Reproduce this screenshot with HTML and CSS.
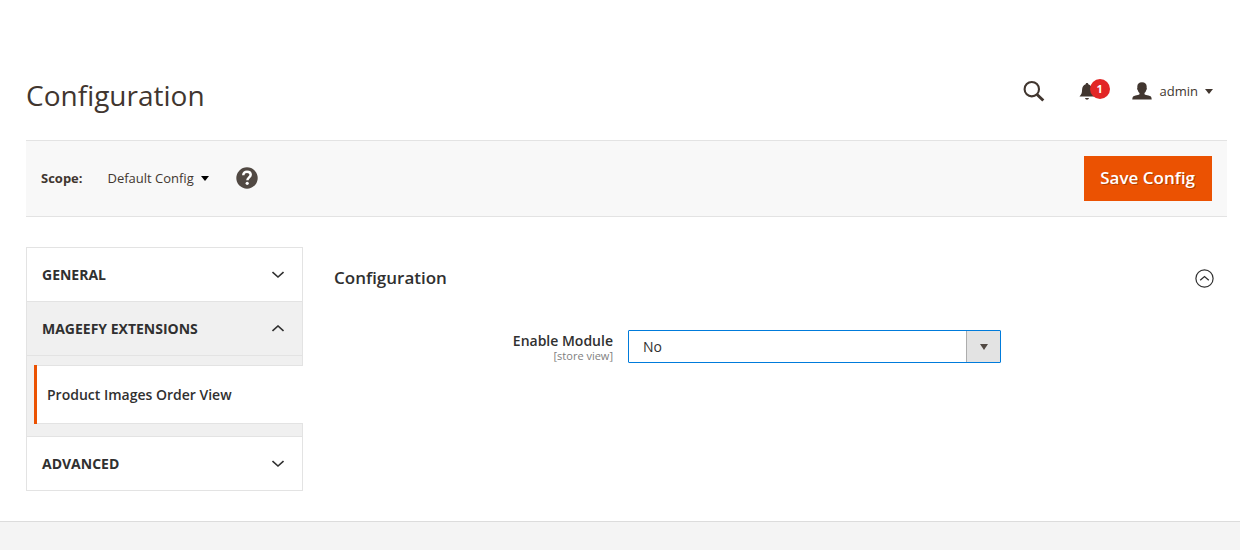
FILE: index.html
```html
<!DOCTYPE html>
<html lang="en">
<head>
<meta charset="utf-8">
<meta name="viewport" content="width=device-width, initial-scale=1">
<title>Configuration</title>
<link rel="stylesheet" href="styles.css">
</head>
<body>
<div class="page">
  <header class="header">
    <h1 class="page-title">Configuration</h1>
    <div class="header-tools">
      <button class="tool tool-search" type="button" aria-label="Search">
        <svg width="22" height="22" viewBox="0 0 22 22" fill="none" stroke="#41362f"><circle cx="8.800" cy="9.200" r="7.200" stroke-width="2.100"/><path d="M14 14.500l6.300 6" stroke-width="3"/></svg>
      </button>
      <button class="tool tool-bell" type="button" aria-label="Notifications">
        <svg width="16" height="18" viewBox="0 0 16 18" fill="#41362f"><path d="M8 1c.8 0 1.300.5 1.300 1.300 2.300.7 3.500 2.600 3.600 5.200.1 3.700.8 5.100 2.600 7H.5c1.800-1.900 2.500-3.300 2.600-7C3.200 4.900 4.400 3 6.700 2.300 6.700 1.500 7.200 1 8 1zM6 16h4c-.3 1.200-1 1.700-2 1.700S6.300 17.200 6 16z"/></svg>
        <span class="badge">1</span>
      </button>
      <button class="tool tool-user" type="button">
        <svg width="20" height="18" viewBox="0 0 20 18" fill="#41362f"><path d="M10 .3c3 0 4.700 1.700 4.700 4.400 0 .5 0 .9-.1 1.300.5.200.4 1.400-.4 2.200-.4 1.400-1 2.200-1.700 2.800v1.200c.8.700 2.300.9 4 1.200 2.100.4 3.200 1.100 3.200 4.100H.3c0-3 1.100-3.700 3.200-4.100 1.700-.3 3.200-.5 4-1.200V11c-.7-.6-1.300-1.400-1.700-2.800-.8-.8-.9-2-.4-2.200-.1-.4-.1-.8-.1-1.300C5.300 2 7 .3 10 .3z"/></svg>
        <span>admin</span>
        <svg width="8" height="5" viewBox="0 0 8 5" fill="#41362f"><path d="M0 0h8L4 5z"/></svg>
      </button>
    </div>
  </header>

  <div class="scope-bar">
    <span class="scope-label" id="scope-label">Scope:</span>
    <button class="scope-switch" type="button" aria-describedby="scope-label">
      <span>Default Config</span>
      <svg width="8" height="5" viewBox="0 0 8 5" fill="#000"><path d="M0 0h8L4 5z"/></svg>
    </button>
    <a class="help" href="#" aria-label="Help">
      <svg width="22" height="22" viewBox="0 0 22 22"><circle cx="11" cy="11" r="10.700" fill="#514943"/><path d="M7.300 8.300C7.300 5.900 8.800 4.700 11 4.700s3.700 1.200 3.700 3.100c0 2.400-3.300 2.700-3.300 5.400" fill="none" stroke="#fff" stroke-width="2.500"/><circle cx="11.200" cy="16.300" r="1.600" fill="#fff"/></svg>
    </a>
    <button class="save" type="button">Save Config</button>
  </div>

  <div class="columns">
    <nav class="tabs">
      <button class="tab" type="button">GENERAL
        <svg width="12" height="8" viewBox="0 0 12 8"><path d="M.5 1L6 6l5.500-5"/></svg>
      </button>
      <button class="tab tab-open" type="button" aria-expanded="true">MAGEEFY EXTENSIONS
        <svg width="12" height="8" viewBox="0 0 12 8"><path d="M.5 6L6 1l5.500 5"/></svg>
      </button>
      <div class="sub">
        <a class="sub-item" href="#">Product Images Order View</a>
      </div>
      <button class="tab" type="button">ADVANCED
        <svg width="12" height="8" viewBox="0 0 12 8"><path d="M.5 1L6 6l5.500-5"/></svg>
      </button>
    </nav>

    <main class="content">
      <div class="section-head">
        <h2 class="section-title">Configuration</h2>
        <button class="collapse" type="button" aria-label="Collapse section">
          <svg width="19" height="19" viewBox="0 0 19 19" fill="none" stroke="#303030"><circle cx="9.500" cy="9.500" r="8.600" stroke-width="1.200"/><path d="M5.200 11.200l4.300-3.700 4.300 3.700" stroke-width="1.300"/></svg>
        </button>
      </div>
      <div class="field">
        <label class="field-label" for="enable">Enable Module <span class="field-scope">[store view]</span></label>
        <div class="select-wrap">
          <select class="select" id="enable"><option>No</option><option>Yes</option></select>
          <span class="select-arrow"><svg width="8" height="6" viewBox="0 0 8 6" fill="#514943"><path d="M0 0h8L4 6z"/></svg></span>
        </div>
      </div>
    </main>
  </div>
</div>
<footer class="footer"></footer>
</body>
</html>
```

FILE: styles.css
```css
* {
  box-sizing: border-box;
}

body {
  display: flex;
  flex-direction: column;
  min-height: 100vh;
  margin: 0;
  background: #fff;
  color: #303030;
  font-family: "Open Sans", "Noto Sans", sans-serif;
  font-size: 14px;
}

button {
  margin: 0;
  padding: 0;
  border: 0;
  background: none;
  color: inherit;
  font: inherit;
  cursor: pointer;
}

svg {
  display: block;
  flex: none;
}

.page {
  padding: 75px 13px 30px 26px;
}

.header {
  display: flex;
  justify-content: space-between;
  align-items: flex-start;
  height: 65px;
}

.page-title {
  margin: 0;
  color: #41362f;
  font-size: 28px;
  font-weight: 400;
  line-height: 40px;
}

.header-tools {
  display: flex;
  align-items: center;
  height: 32px;
  padding-right: 14px;
}

.tool {
  position: relative;
  display: flex;
  align-items: center;
  color: #41362f;
  font-size: 13px;
}

.tool-bell {
  margin-left: 34px;
}

.tool-user {
  margin-left: 37px;
}

.tool-user span {
  margin: 0 7px 0 8px;
}

.badge {
  position: absolute;
  top: -3px;
  left: 11px;
  width: 20px;
  height: 20px;
  border-radius: 50%;
  background: #e22626;
  color: #fff;
  font-size: 11px;
  font-weight: 700;
  line-height: 20px;
  text-align: center;
}

.scope-bar {
  display: flex;
  align-items: center;
  padding: 15px;
  border: solid #e3e3e3;
  border-width: 1px 0;
  background: #f8f8f8;
  color: #41362f;
  font-size: 13px;
}

.scope-label {
  padding-bottom: 2px;
  font-weight: 700;
}

.scope-switch {
  display: flex;
  align-items: center;
  gap: 7px;
  margin: 0 27px 0 25px;
}

.scope-switch span {
  padding-bottom: 2px;
}

.help {
  padding-bottom: 1px;
}

.save {
  height: 45px;
  margin-left: auto;
  padding: 0 17px 2px 16px;
  background: #eb5202;
  color: #fff;
  font-size: 17px;
  font-weight: 600;
  text-shadow: 1px 1px 0 rgba(0, 0, 0, 0.25);
}

.columns {
  display: flex;
  align-items: flex-start;
  gap: 31px;
  padding: 30px 13px 0 0;
}

.tabs {
  flex: none;
  width: 277px;
  border-bottom: 1px solid #e3e3e3;
}

.tab {
  display: flex;
  align-items: center;
  justify-content: space-between;
  width: 100%;
  height: 54px;
  padding: 0 18px 0 15px;
  border: solid #e3e3e3;
  border-width: 1px 1px 0;
  font-weight: 700;
}

.tab svg {
  fill: none;
  stroke: #303030;
  stroke-width: 1.6;
}

.tab-open {
  background: #f0f0f0;
}

.sub {
  padding: 9px 0 12px 7px;
  border: solid #e3e3e3;
  border-width: 1px 1px 0;
  background: #f0f0f0;
}

.sub-item {
  display: block;
  position: relative;
  margin-right: -1px;
  padding: 18px 13px;
  border: solid #e3e3e3;
  border-width: 1px 0;
  background: #fff;
  color: #303030;
  font-weight: 600;
  line-height: 21px;
  text-decoration: none;
}

.sub-item::before {
  content: "";
  position: absolute;
  top: -1px;
  bottom: -1px;
  left: 0;
  width: 3px;
  background: #eb5202;
}

.content {
  flex: 1;
  min-width: 0;
}

.section-head {
  display: flex;
  align-items: center;
  justify-content: space-between;
  height: 63px;
}

.section-title {
  margin: 0;
  padding-bottom: 2px;
  font-size: 17px;
  font-weight: 600;
}

.field {
  display: grid;
  grid-template-columns: 279fr 373fr 198fr;
  gap: 15px;
  padding-top: 20px;
}

.field-label {
  font-weight: 600;
  line-height: 21px;
  text-align: right;
}

.field-scope {
  display: block;
  color: #808080;
  font-size: 11px;
  font-weight: 400;
  line-height: 10px;
}

.select-wrap {
  position: relative;
}

.select {
  display: block;
  width: 100%;
  height: 33px;
  padding: 0 44px 0 14px;
  border: 1px solid #007bdb;
  border-radius: 1px;
  outline: 0;
  background: #fff;
  color: #303030;
  font: inherit;
  appearance: none;
}

.select-arrow {
  position: absolute;
  top: 1px;
  right: 1px;
  bottom: 1px;
  display: flex;
  align-items: center;
  justify-content: center;
  width: 34px;
  border-left: 1px solid #adadad;
  background: #e3e3e3;
  pointer-events: none;
}

.footer {
  flex: 1;
  border-top: 1px solid #dcdcdc;
  background: #f4f4f4;
}
```
